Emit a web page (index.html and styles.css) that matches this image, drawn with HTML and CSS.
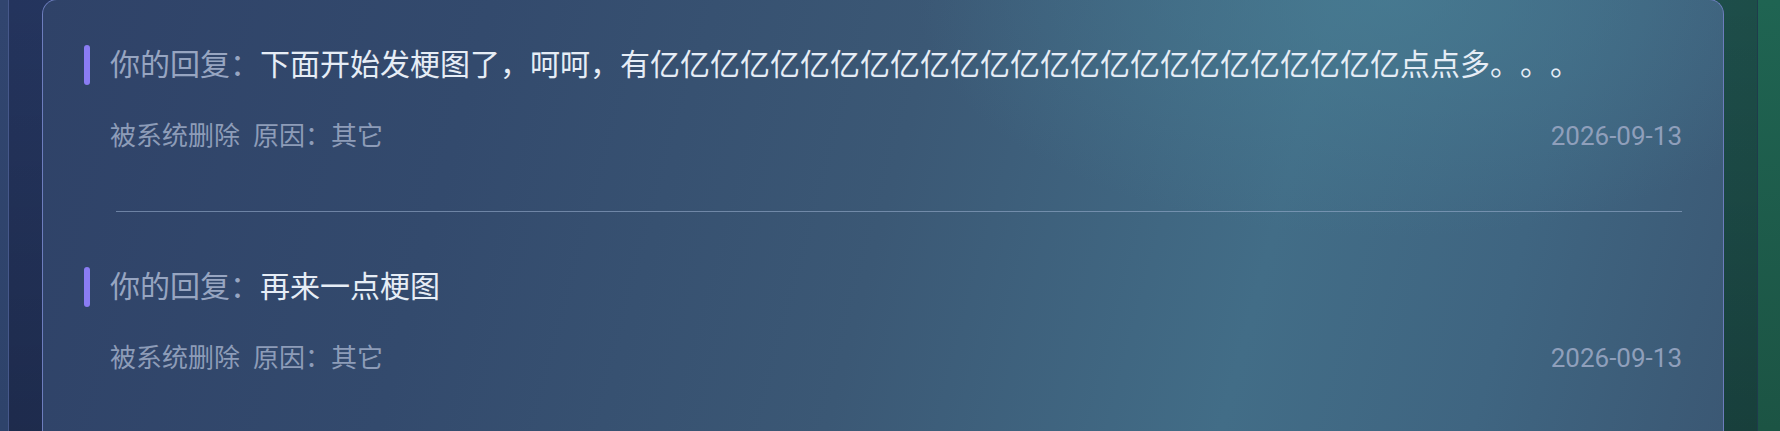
FILE: index.html
```html
<!DOCTYPE html>
<html lang="zh-CN">
<head>
<meta charset="utf-8">
<title>回复记录</title>
<link rel="stylesheet" href="styles.css">
</head>
<body>
<div class="page">
  <div class="edge-left"></div>
  <div class="stage">
    <section class="card">
      <article class="item">
        <div class="reply">
          <span class="bar"></span>
          <span class="label">你的回复：</span><span class="content">下面开始发梗图了，呵呵，有亿亿亿亿亿亿亿亿亿亿亿亿亿亿亿亿亿亿亿亿亿亿亿亿亿点点多。。。</span>
        </div>
        <div class="meta">
          <div class="status"><span>被系统删除</span><span>原因：其它</span></div>
          <span class="date">2026-09-13</span>
        </div>
      </article>
      <hr class="divider">
      <article class="item">
        <div class="reply">
          <span class="bar"></span>
          <span class="label">你的回复：</span><span class="content">再来一点梗图</span>
        </div>
        <div class="meta">
          <div class="status"><span>被系统删除</span><span>原因：其它</span></div>
          <span class="date">2026-09-13</span>
        </div>
      </article>
    </section>
  </div>
  <div class="edge-right"></div>
</div>
</body>
</html>
```

FILE: styles.css
```css
html, body {
  margin: 0;
  padding: 0;
  width: 1780px;
  height: 431px;
  overflow: hidden;
  background: #22305a;
  font-family: Roboto, "Noto Sans CJK SC", sans-serif;
  text-spacing-trim: space-all;
}

.page {
  display: flex;
  width: 1780px;
  height: 431px;
}

.edge-left {
  width: 8px;
  flex: none;
  background: linear-gradient(180deg, #31456f 0%, #2e436b 100%);
  border-right: 1px solid #46588a;
}

.edge-right {
  width: 22px;
  flex: none;
  background: linear-gradient(180deg, #1f6452 0%, #1c5444 100%);
  border-left: 1px solid #1f3b4c;
}

.stage {
  flex: 1;
  padding: 0 33px 0 33px;
  background:
    linear-gradient(180deg, rgba(0,0,0,0) 0%, rgba(0,0,0,0.18) 100%),
    linear-gradient(90deg, #24345d 0%, #27406a 40%, #1f4f56 85%, #1d4d48 100%);
}

.card {
  margin-top: -1px;
  height: 432px;
  box-sizing: border-box;
  padding: 45px 41px 0 41px;
  border: 1px solid #6d7dbd;
  border-bottom: none;
  border-radius: 15px 15px 0 0;
  background:
    radial-gradient(ellipse 28% 55% at 80% 0%, rgba(72, 126, 148, 0.7) 0%, rgba(72, 126, 148, 0) 100%),
    linear-gradient(105deg, #2f4268 0%, #334a6d 25%, #3b5875 50%, #426d87 72%, #3f6581 86%, #3b5874 100%);
}

.item {
  display: flex;
  flex-direction: column;
}

.reply {
  display: flex;
  align-items: center;
  height: 40px;
  line-height: 40px;
  font-size: 30px;
  white-space: nowrap;
}

.bar {
  width: 6px;
  height: 40px;
  border-radius: 3px;
  background: #8a7cf3;
  margin-right: 20px;
  flex: none;
}

.label {
  color: #97a5c1;
}

.content {
  color: #e6edf6;
}

.meta {
  display: flex;
  justify-content: space-between;
  align-items: center;
  margin-top: 33px;
  height: 36px;
  line-height: 36px;
  font-size: 26px;
  padding-left: 26px;
}

.status {
  display: flex;
  gap: 13px;
  color: #8d9cb8;
}

.date {
  color: #8f9fbb;
  font-family: Roboto, sans-serif;
}

.divider {
  border: 0;
  height: 1px;
  background: rgba(150, 172, 204, 0.6);
  margin: 57px 0 55px 32px;
}
```
